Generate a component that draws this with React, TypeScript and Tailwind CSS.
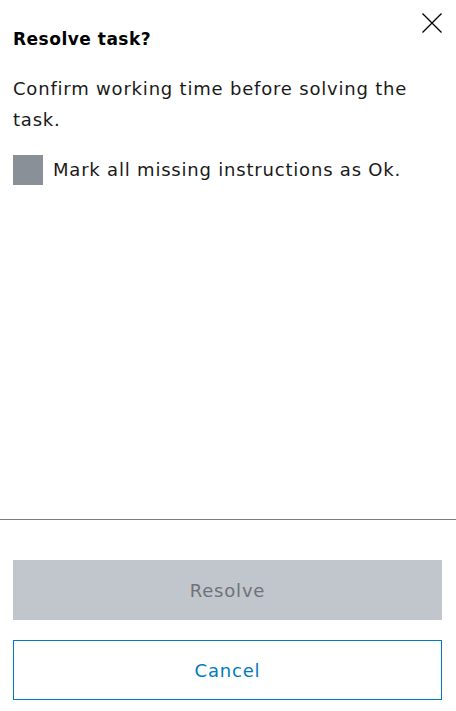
const CloseIcon = () => (
  <svg width="20" height="20" viewBox="0 0 20 20" fill="none" stroke="currentColor" strokeWidth="1.3">
    <path d="M0.5 0.5 L19.5 19.5 M19.5 0.5 L0.5 19.5" />
  </svg>
);

const App = () => {
  return (
    <div
      className="relative flex h-[711px] w-[456px] flex-col bg-white text-[#000000]"
      style={{ fontFamily: '"DejaVu Sans", "Noto Sans", sans-serif' }}
    >
      {/* Close button */}
      <button className="absolute left-[422px] top-[13px] text-black">
        <CloseIcon />
      </button>

      <div className="flex flex-1 flex-col px-[13px] pt-[26px]">
        <h2 className="text-[17px] font-bold leading-[26px] tracking-[0.5px]">
          Resolve task?
        </h2>
        <p className="mt-[21px] text-[18px] leading-[31px] tracking-[0.8px] text-[#1a1a1a]">
          Confirm working time before solving the task.
        </p>
        <label className="mt-[20px] flex items-center gap-[10px]">
          <span className="h-[30px] w-[30px] shrink-0 bg-[#8a9097]" />
          <span className="text-[18px] leading-[30px] tracking-[0.8px] text-[#1a1a1a]">
            Mark all missing instructions as Ok.
          </span>
        </label>
      </div>

      <div className="h-px w-full bg-[#7d7d7d]" />

      <div className="flex flex-col gap-[20px] pl-[13px] pr-[14px] pb-[11px] pt-[40px]">
        <button
          disabled
          className="h-[60px] w-full bg-[#c1c5cc] text-[18px] tracking-[0.8px] text-[#6f7377]"
        >
          Resolve
        </button>
        <button className="h-[60px] w-full border border-[#007bc0] bg-white text-[18px] tracking-[0.8px] text-[#007bc0]">
          Cancel
        </button>
      </div>
    </div>
  );
};

export default App;
